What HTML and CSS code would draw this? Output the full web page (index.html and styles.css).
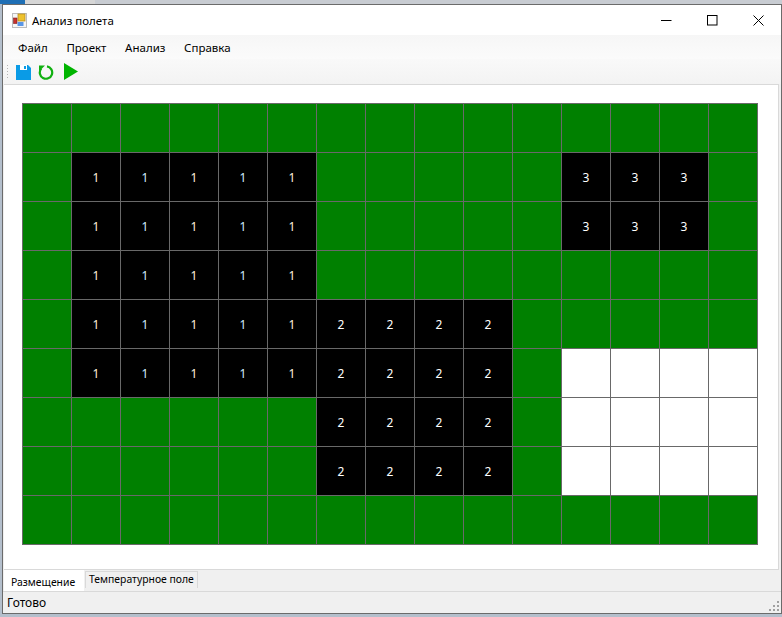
FILE: index.html
```html
<!DOCTYPE html>
<html lang="ru">
<head>
	<meta charset="utf-8">
	<title>Анализ полета</title>
	<link rel="stylesheet" href="styles.css">
</head>
<body>
<div class="desktop-strip"></div>
<div class="window">
	<div class="titlebar">
		<svg class="app-icon" width="15" height="15" viewBox="0 0 15 15">
			<rect x="0.5" y="0.5" width="14" height="14" fill="#f6f6f6" stroke="#bdbdbd"/>
			<rect x="6" y="1" width="7" height="7" fill="#eec22e" stroke="#b8901e" stroke-width="0.8"/>
			<rect x="1.5" y="5" width="3.5" height="5.5" fill="#c8302c" stroke="#7a2020" stroke-width="0.6"/>
			<rect x="5.5" y="9" width="6" height="4" fill="#5a96e6"/>
		</svg>
		<span class="title-text">Анализ полета</span>
		<div class="win-buttons">
			<svg width="11" height="11" viewBox="0 0 11 11"><path d="M0 5.5H10.5" stroke="#000" fill="none"/></svg>
			<svg width="11" height="11" viewBox="0 0 11 11"><rect x="0.5" y="0.5" width="9.5" height="9.5" stroke="#000" fill="none"/></svg>
			<svg width="11" height="11" viewBox="0 0 11 11"><path d="M0.5 0.5L10.5 10.5M10.5 0.5L0.5 10.5" stroke="#000" fill="none"/></svg>
		</div>
	</div>

	<div class="menubar">
		<span>Файл</span>
		<span>Проект</span>
		<span>Анализ</span>
		<span>Справка</span>
	</div>

	<div class="toolbar">
		<div class="grip"></div>
		<svg width="15" height="16" viewBox="0 0 15 16">
			<path d="M0 1H12L15 4V16H0Z" fill="#0a9be6"/>
			<path d="M4 1H11V6H4Z" fill="#fff"/>
			<rect x="8" y="2" width="2" height="3" fill="#0a9be6"/>
		</svg>
		<svg width="16" height="16" viewBox="0 0 16 16">
			<path d="M9 2.4A6.2 6.2 0 1 1 3.2 4.6" fill="none" stroke="#10b010" stroke-width="2.2"/>
			<path d="M1 1.5H7L1 7.5Z" fill="#10b010"/>
		</svg>
		<svg class="play" width="14" height="17" viewBox="0 0 14 17"><path d="M0 0L14 8.5L0 17Z" fill="#00b400"/></svg>
	</div>

	<div class="tab-page">
		<div class="field">
			<div class="c g"></div><div class="c g"></div><div class="c g"></div><div class="c g"></div><div class="c g"></div><div class="c g"></div><div class="c g"></div><div class="c g"></div><div class="c g"></div><div class="c g"></div><div class="c g"></div><div class="c g"></div><div class="c g"></div><div class="c g"></div><div class="c g"></div>

			<div class="c g"></div><div class="c k warm">1</div><div class="c k cool">1</div><div class="c k warm">1</div><div class="c k cool">1</div><div class="c k warm">1</div><div class="c g"></div><div class="c g"></div><div class="c g"></div><div class="c g"></div><div class="c g"></div><div class="c k">3</div><div class="c k">3</div><div class="c k">3</div><div class="c g"></div>

			<div class="c g"></div><div class="c k warm">1</div><div class="c k cool">1</div><div class="c k warm">1</div><div class="c k cool">1</div><div class="c k warm">1</div><div class="c g"></div><div class="c g"></div><div class="c g"></div><div class="c g"></div><div class="c g"></div><div class="c k">3</div><div class="c k">3</div><div class="c k">3</div><div class="c g"></div>

			<div class="c g"></div><div class="c k warm">1</div><div class="c k cool">1</div><div class="c k warm">1</div><div class="c k cool">1</div><div class="c k warm">1</div><div class="c g"></div><div class="c g"></div><div class="c g"></div><div class="c g"></div><div class="c g"></div><div class="c g"></div><div class="c g"></div><div class="c g"></div><div class="c g"></div>

			<div class="c g"></div><div class="c k warm">1</div><div class="c k cool">1</div><div class="c k warm">1</div><div class="c k cool">1</div><div class="c k warm">1</div><div class="c k">2</div><div class="c k">2</div><div class="c k">2</div><div class="c k">2</div><div class="c g"></div><div class="c g"></div><div class="c g"></div><div class="c g"></div><div class="c g"></div>

			<div class="c g"></div><div class="c k warm">1</div><div class="c k cool">1</div><div class="c k warm">1</div><div class="c k cool">1</div><div class="c k warm">1</div><div class="c k">2</div><div class="c k">2</div><div class="c k">2</div><div class="c k">2</div><div class="c g"></div><div class="c w"></div><div class="c w"></div><div class="c w"></div><div class="c w"></div>

			<div class="c g"></div><div class="c g"></div><div class="c g"></div><div class="c g"></div><div class="c g"></div><div class="c g"></div><div class="c k">2</div><div class="c k">2</div><div class="c k">2</div><div class="c k">2</div><div class="c g"></div><div class="c w"></div><div class="c w"></div><div class="c w"></div><div class="c w"></div>

			<div class="c g"></div><div class="c g"></div><div class="c g"></div><div class="c g"></div><div class="c g"></div><div class="c g"></div><div class="c k">2</div><div class="c k">2</div><div class="c k">2</div><div class="c k">2</div><div class="c g"></div><div class="c w"></div><div class="c w"></div><div class="c w"></div><div class="c w"></div>

			<div class="c g"></div><div class="c g"></div><div class="c g"></div><div class="c g"></div><div class="c g"></div><div class="c g"></div><div class="c g"></div><div class="c g"></div><div class="c g"></div><div class="c g"></div><div class="c g"></div><div class="c g"></div><div class="c g"></div><div class="c g"></div><div class="c g"></div>
		</div>
	</div>

	<div class="tabs">
		<div class="tab active">Размещение</div>
		<div class="tab">Температурное поле</div>
	</div>

	<div class="statusbar">
		<span>Готово</span>
		<svg class="size-grip" width="10" height="10" viewBox="0 0 10 10">
			<path d="M8 0h2v2H8zM4 4h2v2H4zM8 4h2v2H8zM0 8h2v2H0zM4 8h2v2H4zM8 8h2v2H8z" fill="#a0a0a0"/>
		</svg>
	</div>
</div>
</body>
</html>
```

FILE: styles.css
```css
html, body {
	height: 100%;
}

body {
	margin: 0;
	height: 617px;
	overflow: hidden;
	background: #b4bfcc;
	font-family: "Noto Sans", "Open Sans", sans-serif;
	font-size: 11.5px;
	color: #000;
	display: flex;
	flex-direction: column;
}

.desktop-strip {
	height: 4px;
	flex: none;
	background: linear-gradient(to right, #1f6fb5 0, #1f6fb5 25px, #d6d6d6 25px, #d6d6d6 95px, #c8ccd2 95px);
}

.window {
	margin-left: 2px;
	width: 780px;
	height: 610px;
	flex: none;
	box-sizing: border-box;
	border: 1px solid #6b6b6b;
	background: #f0f0f0;
	display: flex;
	flex-direction: column;
}

/* title bar */
.titlebar {
	height: 30px;
	flex: none;
	background: #fff;
	display: flex;
	align-items: center;
	padding-left: 9px;
}

.title-text {
	margin-left: 5px;
}

.win-buttons {
	margin-left: auto;
	display: flex;
	gap: 35px;
	padding-right: 17px;
}

/* menu and tools */
.menubar {
	height: 24px;
	flex: none;
	background: linear-gradient(to bottom, #f6f6f6, #fbfbfb);
	display: flex;
	align-items: center;
	padding-left: 15px;
	gap: 18.7px;
}

.toolbar {
	height: 25px;
	flex: none;
	background: linear-gradient(to bottom, #f9f9f9, #f3f3f3);
	display: flex;
	align-items: center;
	padding-left: 3px;
}

.toolbar svg {
	margin-left: 7px;
}

.toolbar .play {
	margin-left: 10px;
}

.grip {
	width: 3px;
	height: 15px;
	background: radial-gradient(circle, #b4b4b4 1px, transparent 1px) 0 0 / 3px 3px;
}

/* the field */
.tab-page {
	flex: 1;
	margin: 0 2px 0 1px;
	padding: 18px;
	background: #fff;
	border-top: 1px solid #d9d9d9;
	border-right: 1px solid #d9d9d9;
	border-bottom: 1px solid #d9d9d9;
}

.field {
	display: grid;
	grid-template-columns: repeat(15, 48px);
	grid-auto-rows: 48px;
	gap: 1px;
	width: max-content;
	padding: 1px;
	background: #696969;
}

.c {
	display: flex;
	align-items: center;
	justify-content: center;
	font-size: 12px;
}

.g {
	background: #008000;
}

.k {
	background: #000;
	color: #fff;
}

.w {
	background: #fff;
}

.warm {
	color: #fff0dc;
}

.cool {
	color: #d4eeff;
}

/* tabs and status */
.tabs {
	height: 21px;
	flex: none;
	display: flex;
	align-items: flex-start;
	padding-left: 1px;
	font-size: 10.4px;
}

.tab {
	height: 17px;
	line-height: 15px;
	margin: 1px 0 0 1px;
	padding: 0 3px;
	box-sizing: border-box;
	border: 1px solid #d9d9d9;
	border-bottom: none;
}

.tab.active {
	width: 80px;
	height: 21px;
	line-height: 24px;
	margin: 0;
	padding: 0 0 0 7px;
	box-sizing: border-box;
	background: #fff;
	border: none;
}

.statusbar {
	height: 21px;
	flex: none;
	border-top: 1px solid #d9d9d9;
	display: flex;
	align-items: center;
	padding-left: 4px;
	position: relative;
	font-size: 12px;
}

.size-grip {
	position: absolute;
	right: 2px;
	bottom: 2px;
}
```
